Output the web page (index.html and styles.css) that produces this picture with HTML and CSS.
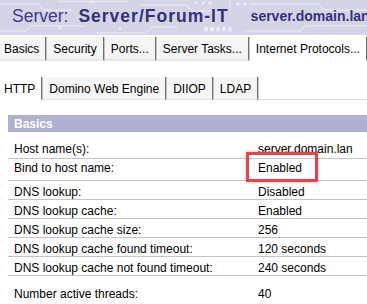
FILE: index.html
```html
<!DOCTYPE html>
<html lang="en">
    <head>
        <meta charset="UTF-8">
        <meta name="viewport" content="width=device-width, initial-scale=1.0">
        <title>Server: Server/Forum-IT</title>

        <link rel="stylesheet" href="styles.css">
    </head>
    <body>
        <header class="banner">
            <!-- circuit board decoration behind the title -->
            <svg class="banner-art" width="367" height="35" viewBox="0 0 367 35">
                <g stroke="#e4e4f1" stroke-width="1.5" fill="none">
                    <path d="M0 4 H38 L44 10 H72"/>
                    <path d="M58 1.5 H128"/>
                    <path d="M140 5 H186 L192 11 H214"/>
                    <path d="M0 31 H26 L31 26 H84"/>
                    <path d="M96 33 H146 L152 27 H178"/>
                    <path d="M250 4 H318 L324 10 H367"/>
                    <path d="M244 31 H300 L305 26 H367"/>
                    <path d="M230 0 V8"/>
                </g>
                <g fill="#ededf7">
                    <circle cx="196" cy="3" r="1.6"/>
                    <circle cx="203" cy="3" r="1.6"/>
                    <circle cx="210" cy="3" r="1.6"/>
                    <circle cx="238" cy="4" r="1.6"/>
                    <circle cx="245" cy="4" r="1.6"/>
                    <circle cx="92" cy="2" r="1.4"/>
                    <circle cx="120" cy="29" r="1.4"/>
                    <ellipse cx="206" cy="29" rx="2" ry="2.6"/>
                    <ellipse cx="212" cy="29" rx="2" ry="2.6"/>
                    <ellipse cx="218" cy="29" rx="2" ry="2.6"/>
                    <ellipse cx="224" cy="29" rx="2" ry="2.6"/>
                    <ellipse cx="230" cy="29" rx="2" ry="2.6"/>
                    <circle cx="340" cy="18" r="1.5"/>
                    <circle cx="60" cy="28" r="1.5"/>
                </g>
            </svg>
            <div class="banner-title">
                <span class="title-label">Server:</span>
                <span class="title-name">Server/Forum-IT</span>
                <span class="title-host">server.domain.lan</span>
            </div>
        </header>

        <nav class="tabs tabs-main">
            <div class="tab">Basics</div>
            <div class="tab">Security</div>
            <div class="tab">Ports...</div>
            <div class="tab">Server Tasks...</div>
            <div class="tab active">Internet Protocols...</div>
        </nav>

        <nav class="tabs tabs-sub">
            <div class="tab active">HTTP</div>
            <div class="tab">Domino Web Engine</div>
            <div class="tab">DIIOP</div>
            <div class="tab">LDAP</div>
            <div class="tab-fill"></div>
        </nav>

        <section class="panel">
            <div class="panel-head">Basics</div>
            <div class="prop prop-first">
                <span class="label">Host name(s):</span>
                <span class="value">server.domain.lan</span>
            </div>
            <div class="prop prop-bind">
                <span class="label">Bind to host name:</span>
                <span class="value">Enabled<span class="mark"></span></span>
            </div>
            <div class="prop">
                <span class="label">DNS lookup:</span>
                <span class="value">Disabled</span>
            </div>
            <div class="prop">
                <span class="label">DNS lookup cache:</span>
                <span class="value">Enabled</span>
            </div>
            <div class="prop">
                <span class="label">DNS lookup cache size:</span>
                <span class="value">256</span>
            </div>
            <div class="prop">
                <span class="label">DNS lookup cache found timeout:</span>
                <span class="value">120 seconds</span>
            </div>
            <div class="prop">
                <span class="label">DNS lookup cache not found timeout:</span>
                <span class="value">240 seconds</span>
            </div>
            <div class="prop prop-last">
                <span class="label">Number active threads:</span>
                <span class="value">40</span>
            </div>
        </section>
    </body>
</html>
```

FILE: styles.css
```css
body {
    margin: 0;
    font-family: "Liberation Sans", Arial, sans-serif;
    font-size: 12px;
    color: #000;
    background-color: #fff;
    overflow: hidden;
}

.banner {
    position: relative;
    height: 35px;
    background-color: #d4d4e7;
    overflow: hidden;
    white-space: nowrap;
}

.banner-art {
    position: absolute;
    top: 0;
    left: 0;
}

.banner-title {
    position: relative;
    display: flex;
    align-items: baseline;
    padding: 6px 0 0 12px;
    line-height: 20px;
    color: #3b3b8d;
}

.title-label {
    font-size: 17.5px;
}

.title-name {
    margin-left: 10px;
    font-size: 17.5px;
    font-weight: bold;
    letter-spacing: 1px;
    color: #31317f;
}

.title-host {
    margin-left: 22px;
    font-size: 14px;
    font-weight: bold;
    color: #31317f;
    position: relative;
    top: -1px;
}

.tabs {
    display: flex;
    align-items: flex-end;
    white-space: nowrap;
}

.tabs-main {
    margin-top: 2px;
}

.tabs-sub {
    margin-top: 16px;
}

.tab {
    height: 19px;
    padding: 3px 6px 0 6px;
    line-height: 19px;
    background-color: #f5f5f5;
    border-right: 1px solid #6e6e6e;
    box-shadow: 1px 0 0 #c4c4c4;
    margin-right: 1px;
}

.tab:first-child {
    padding-left: 4px;
}

.tabs-main .tab {
    border-bottom: 2px solid #e6e6e6;
}

.tabs-sub .tab {
    border-bottom: 1px solid #e2e2e2;
}

.tabs .tab.active {
    background-color: #fff;
    border-bottom-color: #fff;
}

.tab-fill {
    flex: 1;
    border-bottom: 1px solid #e2e2e2;
}

.panel {
    margin: 15px 0 0 8px;
}

.panel-head {
    height: 15px;
    padding: 2px 0 0 6px;
    line-height: 15px;
    background-color: #b0b0d1;
    color: #fff;
    font-weight: bold;
}

.prop {
    display: grid;
    grid-template-columns: 244px 1fr;
    padding: 4px 0 0 6px;
    line-height: 14px;
    border-top: 1px solid #c4c4c4;
    white-space: nowrap;
}

.prop-first {
    border-top: none;
    padding-top: 10px;
    padding-bottom: 2px;
}

.prop-bind {
    padding-top: 2px;
    padding-bottom: 5px;
}

.prop-last {
    padding-top: 11px;
}

.value {
    position: relative;
}

/* red highlight drawn over the value */
.mark {
    position: absolute;
    left: -12px;
    top: -9px;
    width: 72px;
    height: 30px;
    box-sizing: border-box;
    border: 3px solid #e8424a;
    box-shadow: 0 0 3px rgba(0, 0, 0, 0.3);
}
```
